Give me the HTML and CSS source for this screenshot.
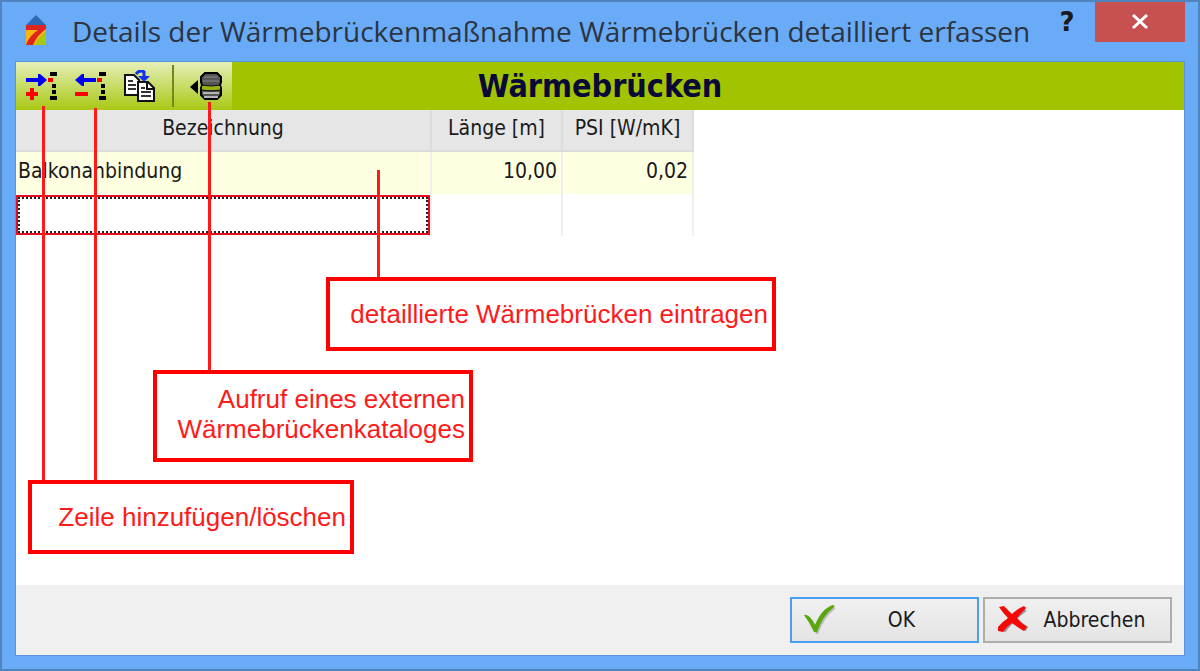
FILE: index.html
```
<!DOCTYPE html>
<html lang="de">
<head>
  <meta charset="UTF-8">
  <title>Wärmebrücken</title>
  <link rel="stylesheet" href="styles.css">
</head>
<body>
  <div class="window">
    <header class="titlebar">
      <svg class="logo" width="22" height="32" viewBox="0 0 22 32">
        <path d="M1 11 L11 1 L21 11 Z" fill="#2f68b5"/>
        <rect x="1" y="11" width="20" height="20" fill="#fbb40f"/>
        <path d="M10 31 Q14 23 21 17 V31 Z" fill="#a8c814"/>
        <path d="M1 11 H21 V15 Q12 21 8 31 H1 Q4 22 13 16 H1 Z" fill="#e02420"/>
      </svg>
      <h1 class="title">Details der Wärmebrückenmaßnahme Wärmebrücken detailliert erfassen</h1>
      <button class="help" type="button" aria-label="Hilfe">?</button>
      <button class="close" type="button" aria-label="Schließen">
        <svg width="18" height="16" viewBox="0 0 18 16">
          <path d="M2 1 L16 14 M16 1 L2 14" stroke="#fff" stroke-width="3" fill="none"/>
        </svg>
      </button>
    </header>

    <main class="client">
      <div class="bar">
        <div class="toolbar">
          <button type="button" aria-label="Zeile hinzufügen">
            <svg width="32" height="32" viewBox="0 0 32 32">
              <path d="M0 8 H12 V4 H14 L21 10 L14 16 H12 V12 H0 Z" fill="#0000f8"/>
              <rect x="22" y="8" width="5" height="4" fill="#f00"/>
              <path d="M24 2h7v4h-7z M26 14h4v4h-4z M26 20h4v4h-4z M24 26h7v4h-7z" fill="#000"/>
              <path d="M4 18h4v4h4v4h-4v4h-4v-4h-4v-4h4z" fill="#f00"/>
            </svg>
          </button>
          <button type="button" aria-label="Zeile löschen">
            <svg width="32" height="32" viewBox="0 0 32 32">
              <path d="M21 8 H9 V4 H7 L0 10 L7 16 H9 V12 H21 Z" fill="#0000f8"/>
              <rect x="22" y="8" width="5" height="4" fill="#f00"/>
              <path d="M24 2h7v4h-7z M26 14h4v4h-4z M26 20h4v4h-4z M24 26h7v4h-7z" fill="#000"/>
              <rect x="0" y="22" width="13" height="4" fill="#f00"/>
            </svg>
          </button>
          <button type="button" aria-label="Kopieren">
            <svg width="32" height="32" viewBox="0 0 32 32">
              <path d="M1 5 H10 L15 10 V25 H1 Z" fill="#fff" stroke="#111" stroke-width="2"/>
              <path d="M4 11h5 M4 15h8 M4 19h8" stroke="#333" stroke-width="2"/>
              <path d="M14 12 H24 L30 18 V31 H14 Z" fill="#fff" stroke="#111" stroke-width="2"/>
              <path d="M23 12 V19 H30" fill="none" stroke="#111" stroke-width="2"/>
              <path d="M17 18h4 M17 22h10 M17 26h10" stroke="#333" stroke-width="2"/>
              <path d="M12 4 Q16 -1 20 2 V7" fill="none" stroke="#1430f0" stroke-width="3"/>
              <path d="M14 6 H26 L20 12 Z" fill="#1430f0"/>
            </svg>
          </button>
          <span class="separator"></span>
          <button type="button" aria-label="Externer Katalog">
            <svg width="32" height="32" viewBox="0 0 32 32">
              <path d="M0 17 L8 10 V24 Z" fill="#000"/>
              <path d="M15 3 H27 L31 7 V12 L30 15 L31 18 V25 L27 29 H15 L11 25 V18 L12 15 L11 12 V7 Z" fill="#555" stroke="#000" stroke-width="2"/>
              <path d="M14 7 H28 M13 11 H29" stroke="#8a8a8a" stroke-width="1"/>
              <path d="M12 16 H30 V20 H12 Z" fill="#9caf12"/>
              <path d="M11 15 Q21 17 31 15 M11 20 Q21 22 31 20" stroke="#111" stroke-width="1" fill="none"/>
              <path d="M13 23 H29 M14 27 H28" stroke="#b4b4b4" stroke-width="2"/>
            </svg>
          </button>
        </div>
        <h2 class="heading">Wärmebrücken</h2>
      </div>

      <div class="sheet">
        <table class="grid">
          <thead>
            <tr><th class="name">Bezeichnung</th><th>Länge [m]</th><th>PSI [W/mK]</th></tr>
          </thead>
          <tbody>
            <tr class="filled"><td class="name">Balkonanbindung</td><td>10,00</td><td>0,02</td></tr>
            <tr><td class="name edit"><input type="text" aria-label="Bezeichnung"></td><td></td><td></td></tr>
          </tbody>
        </table>
      </div>

      <footer class="actions">
        <button class="action ok" type="button">
          <svg width="34" height="34" viewBox="0 0 34 34">
            <path d="M3 14 Q8 15 13 24 Q19 9 31 4 L31 6 Q20 14 14 31 H12 Q8 22 3 14 Z" fill="#888" opacity=".5"/>
            <path d="M0 12 Q5 10 11 22 Q18 5 29 2 Q32 3 29 5 Q19 12 13 29 H10 Q6 20 0 12 Z" fill="#58a80c"/>
          </svg>
          <span>OK</span>
        </button>
        <button class="action" type="button">
          <svg width="34" height="34" viewBox="0 0 34 34">
            <path d="M7 6 Q17 18 30 26 M28 6 Q15 16 6 28" stroke="#999" stroke-width="5" fill="none"/>
            <path d="M2 4 L7 3 Q11 8 15 11 Q20 6 27 3 L29 5 Q24 10 20 15 Q24 20 30 24 L27 28 Q20 24 15 20 Q9 24 6 29 L1 28 V24 Q5 19 11 15 Q6 10 2 4 Z" fill="#f40808"/>
          </svg>
          <span>Abbrechen</span>
        </button>
      </footer>

      <!-- Hinweise über dem Dialog -->
      <div class="leader leader-add"></div>
      <div class="leader leader-delete"></div>
      <div class="leader leader-catalog"></div>
      <div class="leader leader-entry"></div>
      <p class="note note-entry">detaillierte Wärmebrücken eintragen</p>
      <p class="note note-catalog">Aufruf eines externen Wärmebrückenkataloges</p>
      <p class="note note-rows">Zeile hinzufügen/löschen</p>
    </main>
  </div>
</body>
</html>
```
FILE: styles.css
```
* {
  box-sizing: border-box;
}
body {
  margin: 0;
  font-family: "DejaVu Sans Condensed", "DejaVu Sans", sans-serif;
  font-size: 21px;
  color: #1a1a1a;
}
button {
  font: inherit;
  color: inherit;
  border: none;
  background: none;
  padding: 0;
}
svg {
  display: block;
}
.window {
  min-height: 100vh;
  display: flex;
  flex-direction: column;
  padding: 0 13px 13px;
  background: #6aabf7;
  border: 2px solid #5084bd;
}
.titlebar {
  display: flex;
  align-items: flex-start;
  height: 59px;
}
.logo {
  margin: 12px 25px 0 10px;
}
.title {
  flex: 1;
  margin: 9px 0 0;
  font-family: "Open Sans", "Noto Sans", sans-serif;
  font-size: 28px;
  font-weight: normal;
  line-height: 40px;
  white-space: nowrap;
  color: #2b3440;
}
.help {
  width: 24px;
  margin-right: 16px;
  font-family: "DejaVu Sans", sans-serif;
  font-size: 26px;
  font-weight: bold;
  line-height: 40px;
}
.close {
  display: flex;
  align-items: center;
  justify-content: center;
  width: 90px;
  height: 40px;
  background: #c75050;
}
.client {
  position: relative;
  flex: 1;
  display: flex;
  flex-direction: column;
  background: #fff;
  border: 1px solid #5a93d8;
}
.bar {
  display: grid;
  grid-template-columns: 1fr auto 1fr;
  height: 48px;
  background: #a2c400;
}
.toolbar {
  justify-self: start;
  display: flex;
  align-items: center;
  gap: 17px;
  padding: 0 10px;
  background: linear-gradient(#e6efb8, #a8c814);
}
.separator {
  width: 2px;
  height: 42px;
  margin: 0 -1px;
  background: #75861c;
}
.heading {
  margin: 0;
  font-size: 32px;
  line-height: 48px;
  color: #0a0a38;
}
.sheet {
  flex: 1;
}
.grid {
  table-layout: fixed;
  width: 678px;
  border-collapse: separate;
  border-spacing: 0;
}
.grid th, .grid td {
  width: 131px;
  height: 42px;
  padding: 0 4px 4px;
  font-weight: normal;
  text-align: right;
  border-right: 2px solid #efefef;
}
.grid th {
  text-align: center;
  background: #e6e6e6;
  border-right-color: #dcdcdc;
  border-bottom: 2px solid #dcdcdc;
}
.grid .name {
  width: 416px;
}
.grid td.name {
  padding-left: 2px;
  text-align: left;
}
.filled td {
  background: #ffffe1;
  background-clip: padding-box;
}
.grid td.edit {
  padding: 1px 0;
}
.edit input {
  display: block;
  width: 100%;
  height: 40px;
  padding: 0 4px;
  font: inherit;
  border: 2px solid #e01020;
  outline: 2px dotted #222;
  outline-offset: -4px;
}
.actions {
  display: flex;
  justify-content: flex-end;
  gap: 4px;
  padding: 12px 12px;
  background: #f0f0f0;
}
.action {
  display: flex;
  align-items: center;
  width: 189px;
  height: 46px;
  padding: 0 12px;
  background: linear-gradient(#f0f0f0, #e4e4e4);
  border: 2px solid #adadad;
}
.action span {
  flex: 1;
  text-align: center;
}
.ok {
  border-color: #4a9ff5;
}
.leader {
  position: absolute;
  width: 3px;
  background: #ff1a1a;
}
.leader-add {
  left: 26px;
  top: 44px;
  height: 376px;
}
.leader-delete {
  left: 78px;
  top: 46px;
  height: 374px;
}
.leader-catalog {
  left: 192px;
  top: 40px;
  height: 270px;
}
.leader-entry {
  left: 361px;
  top: 108px;
  height: 110px;
}
.note {
  position: absolute;
  display: flex;
  align-items: center;
  justify-content: flex-end;
  margin: 0;
  padding: 0 4px;
  font-family: "Liberation Sans", Arial, sans-serif;
  font-size: 26px;
  line-height: 30px;
  text-align: right;
  color: #ff1a1a;
  background: #fff;
  border: 4px solid #f00;
}
.note-entry {
  left: 310px;
  top: 215px;
  width: 450px;
  height: 74px;
}
.note-catalog {
  left: 137px;
  top: 308px;
  width: 320px;
  height: 92px;
  padding-bottom: 4px;
}
.note-rows {
  left: 12px;
  top: 418px;
  width: 326px;
  height: 74px;
}
```
